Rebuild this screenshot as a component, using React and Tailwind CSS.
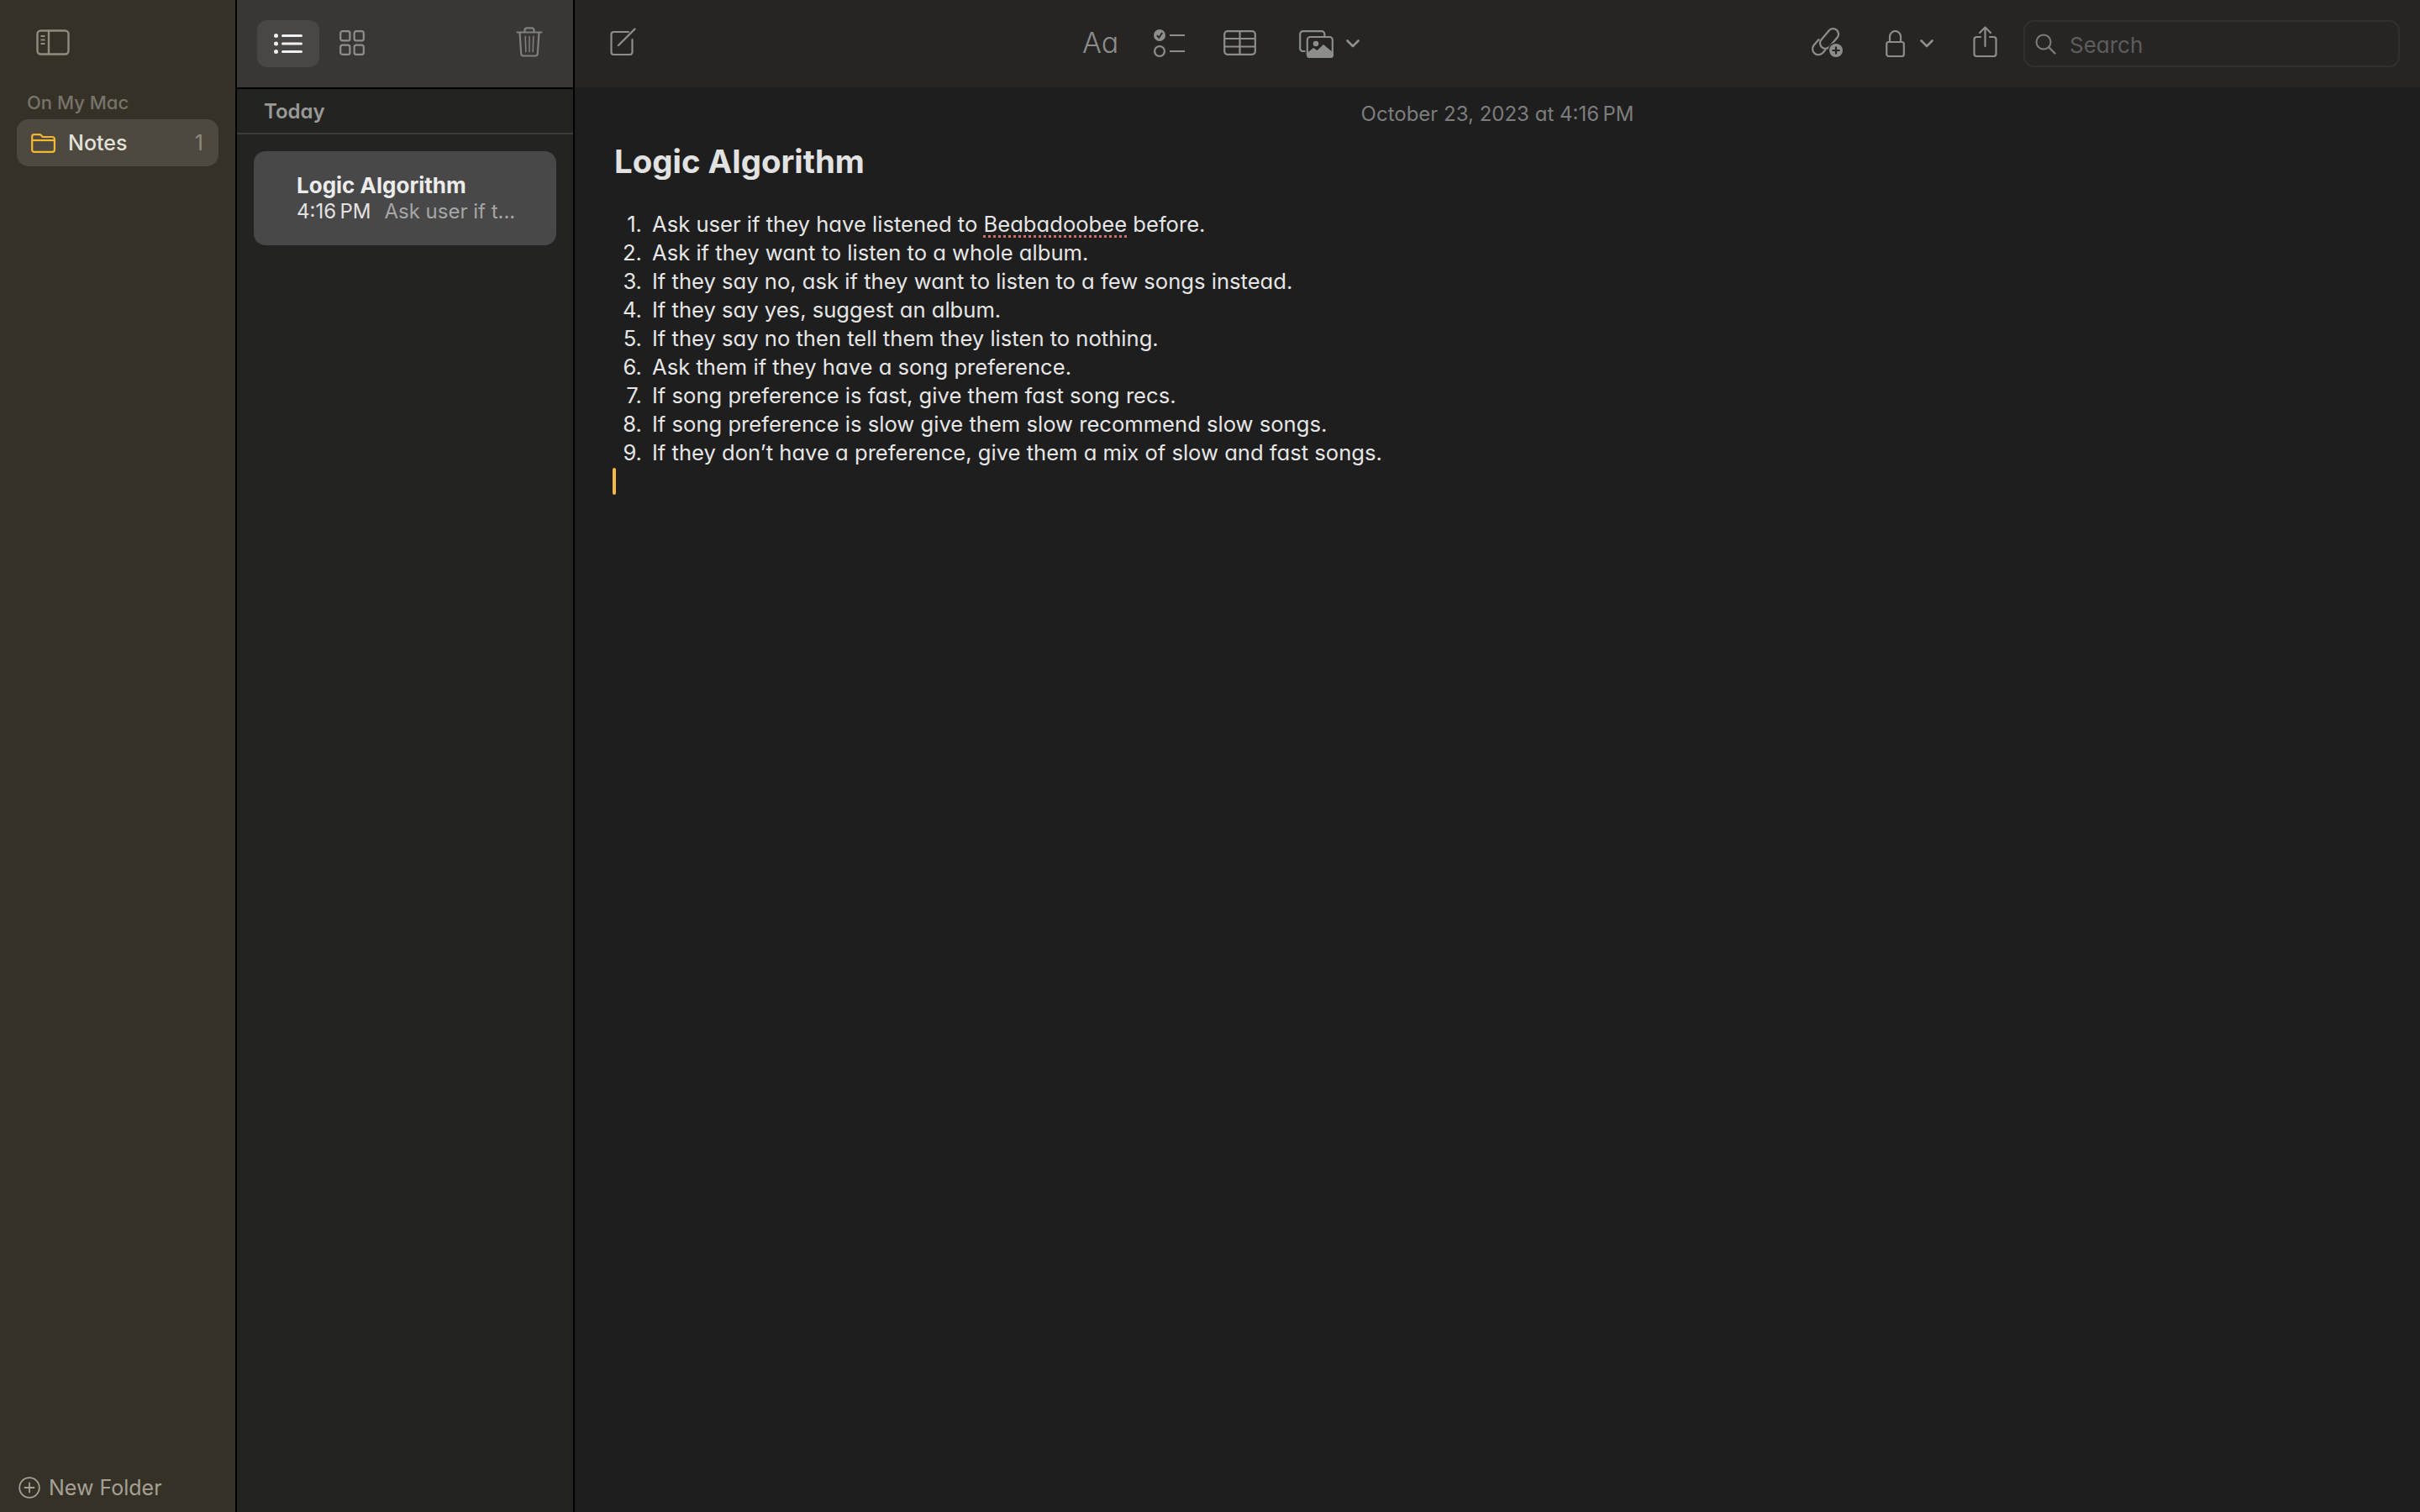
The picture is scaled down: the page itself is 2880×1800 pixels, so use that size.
import React from "react";

const FONT = { fontFamily: "Inter, 'Noto Sans', sans-serif" };

function SidebarIcon() {
  return (
    <svg width="40" height="31" viewBox="0 0 40 31" fill="none" stroke="#8f8c80" strokeWidth="2.4">
      <rect x="1.5" y="1.5" width="37" height="28" rx="4" />
      <path d="M15 1.5v28" />
      <path d="M5.5 8h5M5.5 12.5h5M5.5 17h5" strokeWidth="2" />
    </svg>
  );
}
function FolderIcon() {
  return (
    <svg width="29" height="23" viewBox="0 0 29 23" fill="none" stroke="#f4b834" strokeWidth="2.2" strokeLinejoin="round">
      <path d="M1.2 5V3.6A2.4 2.4 0 0 1 3.6 1.2h6.2c1 0 1.7.4 2.4 1.1l1.6 1.7h11.5a2.6 2.6 0 0 1 2.6 2.6v13a2.2 2.2 0 0 1-2.2 2.2H3.4a2.2 2.2 0 0 1-2.2-2.2z" />
      <path d="M1.2 8h26.6" />
    </svg>
  );
}
function ListIcon() {
  return (
    <svg width="34" height="24" viewBox="0 0 34 24" fill="#f0f0f0">
      <circle cx="2.5" cy="2.5" r="2.5" />
      <circle cx="2.5" cy="12" r="2.5" />
      <circle cx="2.5" cy="21.5" r="2.5" />
      <rect x="9" y="1" width="25" height="3" rx="1.5" />
      <rect x="9" y="10.5" width="25" height="3" rx="1.5" />
      <rect x="9" y="20" width="25" height="3" rx="1.5" />
    </svg>
  );
}
function GridIcon() {
  return (
    <svg width="30" height="30" viewBox="0 0 30 30" fill="none" stroke="#8f8e8b" strokeWidth="2.2">
      <rect x="1.2" y="1.2" width="11.2" height="11.2" rx="2.4" />
      <rect x="17.6" y="1.2" width="11.2" height="11.2" rx="2.4" />
      <rect x="1.2" y="17.6" width="11.2" height="11.2" rx="2.4" />
      <rect x="17.6" y="17.6" width="11.2" height="11.2" rx="2.4" />
    </svg>
  );
}
function TrashIcon() {
  return (
    <svg width="32" height="36" viewBox="0 0 32 36" fill="none" stroke="#80807e" strokeWidth="2.2" strokeLinecap="round">
      <path d="M1.5 6.5h29" />
      <path d="M10.5 6V4a2.6 2.6 0 0 1 2.6-2.6h5.8A2.6 2.6 0 0 1 21.5 4v2" />
      <path d="M4.5 7l1.7 25a2.7 2.7 0 0 0 2.7 2.5h14.2a2.7 2.7 0 0 0 2.7-2.5l1.7-25" />
      <path d="M11.2 11.5l.6 18M16 11.5v18M20.8 11.5l-.6 18" strokeWidth="1.5" />
    </svg>
  );
}
function ComposeIcon() {
  return (
    <svg width="32" height="33" viewBox="0 0 32 33" fill="none" stroke="#8d8d8b" strokeWidth="2.2" strokeLinecap="round">
      <path d="M22 5H4.5A3 3 0 0 0 1.5 8v21a3 3 0 0 0 3 3h19a3 3 0 0 0 3-3V14" />
      <path d="M10 21L29.5 1.5" strokeWidth="2.4" />
    </svg>
  );
}
function ChecklistIcon() {
  return (
    <svg width="38" height="34" viewBox="0 0 38 34" fill="none" stroke="#8d8d8b" strokeWidth="2.2">
      <circle cx="7" cy="8" r="7" fill="#8d8d8b" stroke="none" />
      <path d="M3.8 8.2l2.4 2.6L10.2 5" stroke="#262524" strokeWidth="1.9" />
      <circle cx="7" cy="27" r="5.9" />
      <path d="M19 8h18M19 27h18" />
    </svg>
  );
}
function TableIcon() {
  return (
    <svg width="39" height="30" viewBox="0 0 39 30" fill="none" stroke="#8d8d8b" strokeWidth="2.2">
      <rect x="1.2" y="1.2" width="36.6" height="27.6" rx="3.5" />
      <path d="M1.2 10h36.6M1.2 19.5h36.6M19.5 1.2v27.6" />
    </svg>
  );
}
function MediaIcon() {
  return (
    <svg width="41" height="33" viewBox="0 0 41 33" fill="none">
      <path d="M7.5 25H4.5A3.3 3.3 0 0 1 1.2 21.7V4.5A3.3 3.3 0 0 1 4.5 1.2h22.5A3.3 3.3 0 0 1 30.3 4.5V7" stroke="#8d8d8b" strokeWidth="2.2" />
      <rect x="9.8" y="8" width="30" height="24" rx="3.5" fill="#262524" stroke="#8d8d8b" strokeWidth="2.2" />
      <path d="M9 27.5l8-6.5 4.5 3L29 17l12 10v2.5a3.5 3.5 0 0 1-3.5 3.5h-25A3.5 3.5 0 0 1 9 29.5z" fill="#8d8d8b" />
      <circle cx="20" cy="16" r="3.3" fill="#8d8d8b" />
    </svg>
  );
}
function Chevron() {
  return (
    <svg width="16" height="10" viewBox="0 0 16 10" fill="none" stroke="#8f8f8d" strokeWidth="2.6" strokeLinecap="round" strokeLinejoin="round">
      <path d="M1.5 1.5L8 8l6.5-6.5" />
    </svg>
  );
}
function LinkPlusIcon() {
  return (
    <svg width="39" height="35" viewBox="0 0 39 35" fill="none">
      <g stroke="#8d8d8b" strokeWidth="2.2" fill="none" strokeLinecap="round">
        <rect x="-6.5" y="-13.5" width="13" height="27" rx="6.5" transform="translate(22 13) rotate(40)" />
        <path d="M9.5 14L3.5 21a7 7 0 0 0 10.700 9l3-3.500" />
      </g>
      <circle cx="30" cy="27" r="9.5" fill="#262524" />
      <circle cx="30" cy="27" r="8" fill="#8d8d8b" />
      <path d="M30 22.5v9M25.5 27h9" stroke="#262524" strokeWidth="2.2" />
    </svg>
  );
}
function LockIcon() {
  return (
    <svg width="23" height="32" viewBox="0 0 23 32" fill="none" stroke="#8d8d8b" strokeWidth="2.2">
      <rect x="1.2" y="14" width="20.6" height="17" rx="2.5" />
      <path d="M5 14V7.5a6.5 6.5 0 0 1 13 0V14" />
    </svg>
  );
}
function ShareIcon() {
  return (
    <svg width="29" height="37" viewBox="0 0 29 37" fill="none" stroke="#8d8d8b" strokeWidth="2.2" strokeLinecap="round" strokeLinejoin="round">
      <path d="M9 13H4.5a3 3 0 0 0-3 3v17a3 3 0 0 0 3 3h20a3 3 0 0 0 3-3V16a3 3 0 0 0-3-3H20" />
      <path d="M14.5 24V1.5M8 8l6.5-6.5L21 8" />
    </svg>
  );
}
function SearchIcon() {
  return (
    <svg width="25" height="25" viewBox="0 0 25 25" fill="none" stroke="#7d7d7b" strokeWidth="2" strokeLinecap="round">
      <circle cx="10" cy="10" r="8.5" />
      <path d="M16.5 16.5l7 7" strokeWidth="2.4" />
    </svg>
  );
}
function PlusCircle() {
  return (
    <svg width="26" height="26" viewBox="0 0 26 26" fill="none" stroke="#a5a195" strokeWidth="1.8" strokeLinecap="round">
      <circle cx="13" cy="13" r="11.8" />
      <path d="M13 7.5v11M7.5 13h11" />
    </svg>
  );
}

const ITEMS = [
  ["1.", <>Ask user if they have listened to <span className="underline decoration-dotted decoration-[#c96f6f] decoration-[3px] underline-offset-[4px]">Beabadoobee</span> before.</>],
  ["2.", "Ask if they want to listen to a whole album."],
  ["3.", "If they say no, ask if they want to listen to a few songs instead."],
  ["4.", "If they say yes, suggest an album."],
  ["5.", "If they say no then tell them they listen to nothing."],
  ["6.", "Ask them if they have a song preference."],
  ["7.", "If song preference is fast, give them fast song recs."],
  ["8.", "If song preference is slow give them slow recommend slow songs."],
  ["9.", "If they don’t have a preference, give them a mix of slow and fast songs."],
];

export default function App() {
  return (
    <div style={FONT} className="flex h-[1800px] w-[2880px] overflow-hidden bg-[#1e1e1e] [font-feature-settings:'cv11']">
      <aside className="flex w-[282px] shrink-0 flex-col border-r-2 border-black bg-[#353127]">
        <div className="flex h-[104px] shrink-0 items-start pl-[43px] pt-[35px]">
          <SidebarIcon />
        </div>
        <div className="pl-[32px] pt-[4px] text-[22px] leading-[28px] font-medium text-[#77746a]">On My Mac</div>
        <div className="mx-[20px] mt-[6px] flex h-[56px] items-center rounded-[14px] bg-[#4e493e] pl-[17px] pr-[18px]">
          <FolderIcon />
          <span className="ml-[15px] flex-1 pt-[1px] text-[25px] font-medium text-[#e3e1dc]">Notes</span>
          <span className="pt-[1px] text-[25px] text-[#8d897f]">1</span>
        </div>
        <div className="mt-auto mb-[10px] flex items-center pl-[22px]">
          <PlusCircle />
          <span className="ml-[10px] text-[25px] text-[#a5a195]">New Folder</span>
        </div>
      </aside>

      <section className="flex w-[402px] shrink-0 flex-col border-r-2 border-black bg-[#232322]">
        <div className="flex h-[104px] shrink-0 items-center bg-[#383735] pl-[24px] pr-[36px]">
          <div className="flex h-[56px] w-[74px] items-center justify-center rounded-[12px] bg-[#484745]">
            <ListIcon />
          </div>
          <div className="ml-[24px] mb-[3px] flex-1"><GridIcon /></div>
          <span className="mb-[4px] flex"><TrashIcon /></span>
        </div>
        <div className="flex h-[56px] shrink-0 items-center border-t-2 border-b-2 border-t-black border-b-[#3c3c3a] pl-[32px] pt-[2px] text-[24px] font-semibold text-[#999997]">Today</div>
        <div className="mx-[20px] mt-[20px] flex h-[112px] flex-col justify-center rounded-[14px] bg-[#484848] pl-[51px]">
          <div className="text-[26px] leading-[32px] font-bold text-[#ececec]">Logic Algorithm</div>
          <div className="flex text-[24px] leading-[30px]">
            <span className="text-[#e2e2e2]">4:16{"\u202f"}PM</span>
            <span className="ml-[16px] text-[#a6a6a6]">Ask user if t...</span>
          </div>
        </div>
      </section>

      <main className="flex min-w-0 flex-1 flex-col">
        <header className="flex h-[104px] shrink-0 items-center bg-[#262524] pl-[42px] pr-[24px]">
          <span className="mb-[5px] flex"><ComposeIcon /></span>
          <span className="mb-[3px] ml-[530px] w-[41px] text-[34px] leading-none font-light whitespace-nowrap text-[#8d8d8b]">Aa</span>
          <span className="mb-[2px] ml-[44px] flex"><ChecklistIcon /></span>
          <span className="mb-[2px] ml-[45px] flex"><TableIcon /></span>
          <span className="ml-[51px] flex"><MediaIcon /></span>
          <span className="ml-[15px] flex"><Chevron /></span>
          <span className="mb-[3px] ml-[537px] flex"><LinkPlusIcon /></span>
          <span className="ml-[50px] flex"><LockIcon /></span>
          <span className="ml-[18px] flex"><Chevron /></span>
          <span className="mb-[5px] ml-[47px] flex"><ShareIcon /></span>
          <div className="ml-[31px] flex h-[56px] flex-1 items-center rounded-[12px] border-2 border-[#303030] pl-[12px]">
            <SearchIcon />
            <span className="ml-[16px] pt-[3px] text-[26px] text-[#5d5d5c]">Search</span>
          </div>
        </header>
        <div className="pt-[18px] text-center text-[24px] leading-[28px] text-[#7d7d7d]">October 23, 2023 at 4:16{"\u202f"}PM</div>
        <div className="pl-[47px]">
          <h1 className="mt-[18px] text-[38.4px] leading-[48px] font-bold text-[#e2e2e2]">Logic Algorithm</h1>
          <ol className="mt-[34px] text-[25.6px] leading-[34px] text-[#e6e6e6]">
            {ITEMS.map(([n, t]) => (
              <li key={n} className="flex">
                <span className="w-[33px] shrink-0 text-right">{n}</span>
                <span className="ml-[12px]">{t}</span>
              </li>
            ))}
          </ol>
          <div className="ml-[-2px] mt-[1px] h-[32px] w-[4px] rounded-full bg-[#f5b942]" />
        </div>
      </main>
    </div>
  );
}
